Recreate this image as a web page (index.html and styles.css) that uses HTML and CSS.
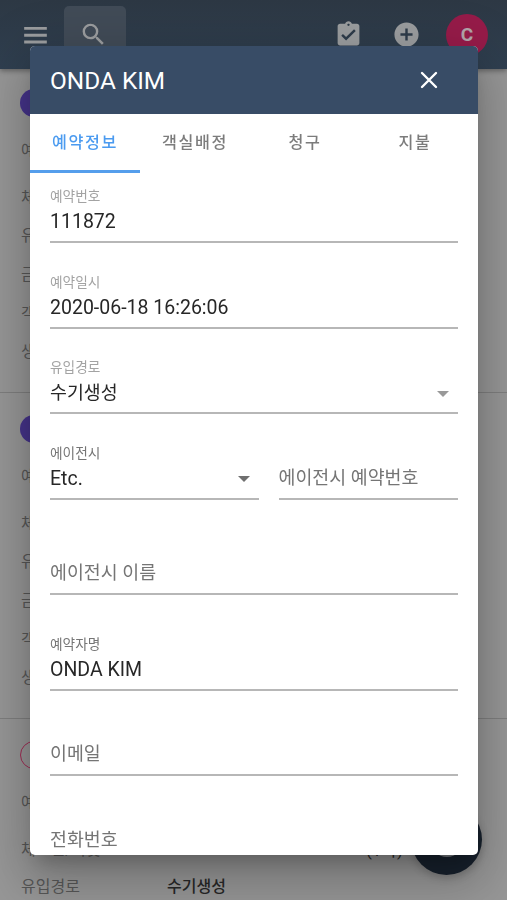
FILE: index.html
```html
<!DOCTYPE html>
<html lang="ko">
<head>
<meta charset="utf-8">
<meta name="viewport" content="width=device-width">
<title>ONDA KIM</title>
<link rel="stylesheet" href="styles.css">
</head>
<body>
<header class="topbar">
  <svg class="menu" viewBox="0 0 24 18"><path d="M0 0h24v3H0zM0 7.2h24v3H0zM0 14.4h24v3H0z"/></svg>
  <div class="search"><svg class="icon" viewBox="0 0 24 24"><path d="M15.5 14h-.79l-.28-.27A6.471 6.471 0 0 0 16 9.5 6.5 6.5 0 1 0 9.5 16c1.61 0 3.09-.59 4.23-1.57l.27.28v.79l5 4.99L20.49 19l-4.99-5zm-6 0C7.01 14 5 11.99 5 9.5S7.01 5 9.5 5 14 7.01 14 9.5 11.99 14 9.5 14z"/></svg></div>
  <div class="actions">
    <svg class="icon" viewBox="0 0 24 24"><path d="M19 3h-4.18C14.4 1.84 13.3 1 12 1s-2.4.84-2.82 2H5c-1.1 0-2 .9-2 2v14c0 1.1.9 2 2 2h14c1.1 0 2-.9 2-2V5c0-1.100-.9-2-2-2zm-7 0c.55 0 1 .45 1 1s-.45 1-1 1-1-.45-1-1 .45-1 1-1zm-2 14l-4-4 1.410-1.410L10 14.170l6.590-6.590L18 9l-8 8z"/></svg>
    <svg class="icon" viewBox="0 0 24 24"><path d="M12 2C6.480 2 2 6.480 2 12s4.480 10 10 10 10-4.480 10-10S17.520 2 12 2zm5 11h-4v4h-2v-4H7v-2h4V7h2v4h4v2z"/></svg>
    <div class="avatar">C</div>
  </div>
</header>
<main class="list">
  <section class="card">
    <div class="chip"></div>
    <div class="row first">예</div><div class="row second">체</div><div class="row">유</div><div class="row">금</div><div class="row">객</div><div class="row">생</div>
  </section>
  <section class="card">
    <div class="chip"></div>
    <div class="row first">예</div><div class="row second">체</div><div class="row">유</div><div class="row">금</div><div class="row">객</div><div class="row">생</div>
  </section>
  <section class="card last">
    <div class="chip outline"></div>
    <div class="row first">예</div>
    <div class="row second"><span class="key">체크인/아웃</span><span class="nights">(1박)</span></div>
    <div class="row"><span class="key">유입경로</span><span class="val">수기생성</span></div>
  </section>
</main>
<div class="fab"><span class="fab-dot"></span></div>

<div class="dialog">
  <div class="dialog-head">
    <h1>ONDA KIM</h1>
    <svg class="close" viewBox="0 0 18 18"><path d="M2 2l14 14M16 2L2 16"/></svg>
  </div>
  <nav class="tabs">
    <div class="tab active">예약정보</div><div class="tab">객실배정</div><div class="tab">청구</div><div class="tab">지불</div>
  </nav>
  <div class="form">
    <div class="field"><span class="label muted">예약번호</span><div class="value">111872</div></div>
    <div class="field"><span class="label muted">예약일시</span><div class="value">2020-06-18 16:26:06</div></div>
    <div class="field"><span class="label muted">유입경로</span><div class="value ko">수기생성<svg class="arrow light" viewBox="0 0 12 6"><path d="M0 0h12L6 6z"/></svg></div></div>
    <div class="pair">
      <div class="field agency"><span class="label">에이전시</span><div class="value">Etc.<svg class="arrow" viewBox="0 0 12 6"><path d="M0 0h12L6 6z"/></svg></div></div>
      <div class="field"><span class="label"></span><div class="value ko placeholder">에이전시 예약번호</div></div>
    </div>
    <div class="field spaced"><span class="label"></span><div class="value ko placeholder">에이전시 이름</div></div>
    <div class="field spaced"><span class="label">예약자명</span><div class="value">ONDA KIM</div></div>
    <div class="field"><span class="label"></span><div class="value ko placeholder">이메일</div></div>
    <div class="field"><span class="label"></span><div class="value ko placeholder">전화번호</div></div>
  </div>
</div>
</body>
</html>
```
FILE: styles.css
```css
* { box-sizing: border-box; }
html, body { height: 100%; overflow: hidden; }
body {
  margin: 0;
  background: #969696;
  font-family: Roboto, "Noto Sans CJK KR", sans-serif;
  color: #272727;
}
.topbar {
  position: relative;
  height: 69px;
  display: flex;
  background: linear-gradient(#2d3844, #2f3f50);
  box-shadow: 0 2px 5px rgba(0, 0, 0, .35);
  fill: #9b9d9f;
}
.menu { width: 23px; height: 17px; margin: 27px 0 0 24px; }
.search {
  width: 62px;
  height: 63px;
  margin: 6px 0 0 17px;
  border-radius: 5px;
  background: #414b57;
  display: flex;
  justify-content: center;
  padding: 14px 3px 0 0;
}
.icon { width: 29px; height: 29px; flex: none; }
.actions { margin-left: auto; padding: 14px 19px 0 0; display: flex; }
.actions .icon { margin: 6px 29px 0 0; }
.actions .icon + .icon { margin-right: 25px; }
.avatar {
  width: 42px;
  height: 42px;
  border-radius: 50%;
  background: #961b49;
  color: #b2a5aa;
  font-size: 19px;
  font-weight: 700;
  line-height: 41px;
  text-align: center;
}
.card {
  height: 326px;
  padding: 22px 20px 0;
  border-bottom: 1px solid #7e7e7e;
}
.card:first-child { height: 324px; padding-top: 20px; }
.card.last { height: 181px; border: 0; }
.chip { width: 90px; height: 28px; border-radius: 14px; background: #45338a; }
.outline { background: none; border: 1px solid #a02c54; }
.row {
  display: flex;
  height: 38.700px;
  align-items: center;
  padding-left: 1px;
  font-size: 16px;
  line-height: 20px;
  color: #575757;
}
.first { height: 42px; margin-top: 13px; }
.second { height: 39px; margin-top: 6px; }
.last .row:last-child { height: 36px; }
.key { width: 146px; }
.val { color: #272727; font-weight: 500; }
.nights { margin-left: 199px; font-size: 17px; color: #272727; }
.fab {
  position: fixed;
  right: 25px;
  bottom: 25px;
  width: 71px;
  height: 71px;
  border-radius: 50%;
  background: #17212d;
  box-shadow: 0 3px 8px rgba(0, 0, 0, .2);
  display: flex;
  justify-content: center;
  align-items: center;
}
.fab-dot { width: 34px; height: 34px; border-radius: 50%; background: #777b80; }
.dialog {
  position: fixed;
  top: 46px;
  left: 30px;
  width: 447.500px;
  height: 809px;
  border-radius: 5px;
  overflow: hidden;
  background: #fff;
  box-shadow: 0 13px 18px -8px rgba(0, 0, 0, .22), 0 28px 45px 4px rgba(0, 0, 0, .14), 0 10px 55px 9px rgba(0, 0, 0, .12);
}
.dialog-head {
  height: 68px;
  padding: 0 40px 0 20px;
  display: flex;
  align-items: center;
  justify-content: space-between;
  background: #384c66;
  color: #fff;
}
h1 { margin: 0; font-size: 24.400px; font-weight: 400; }
.close { width: 18px; height: 18px; stroke: #fff; stroke-width: 2.400; stroke-linecap: round; }
.tabs { display: flex; height: 59px; }
.tab {
  width: 110px;
  height: 59px;
  font-size: 16.200px;
  font-weight: 500;
  line-height: 58px;
  letter-spacing: 1.600px;
  text-align: center;
  color: #7c7c7c;
}
.active { color: #4b9bf0; border-bottom: 3px solid #559eec; }
.form { padding: 14px 19.500px 0 20px; }
.field {
  height: 56px;
  margin-bottom: 29.500px;
  border-bottom: 2px solid #b7b7b7;
}
.label { display: block; height: 20px; font-size: 13.700px; line-height: 19px; color: #757575; }
.muted { color: #a3a3a3; }
.value {
  display: flex;
  height: 30px;
  align-items: center;
  justify-content: space-between;
  font-size: 19.500px;
  line-height: 30px;
}
.ko { font-size: 18.400px; }
.placeholder { height: 28px; color: #757575; }
.arrow { width: 12px; height: 6px; margin: 1px 9px 0 0; fill: #6f6f6f; }
.light { fill: #999; }
.pair { display: flex; gap: 20px; }
.pair .field { flex: 1; }
.pair .agency { flex: none; width: 208.500px; }
.spaced { margin-top: 39.500px; }
.pair + .spaced { margin-top: 10px; }
.spaced + .spaced { margin-top: 39.500px; }
```
